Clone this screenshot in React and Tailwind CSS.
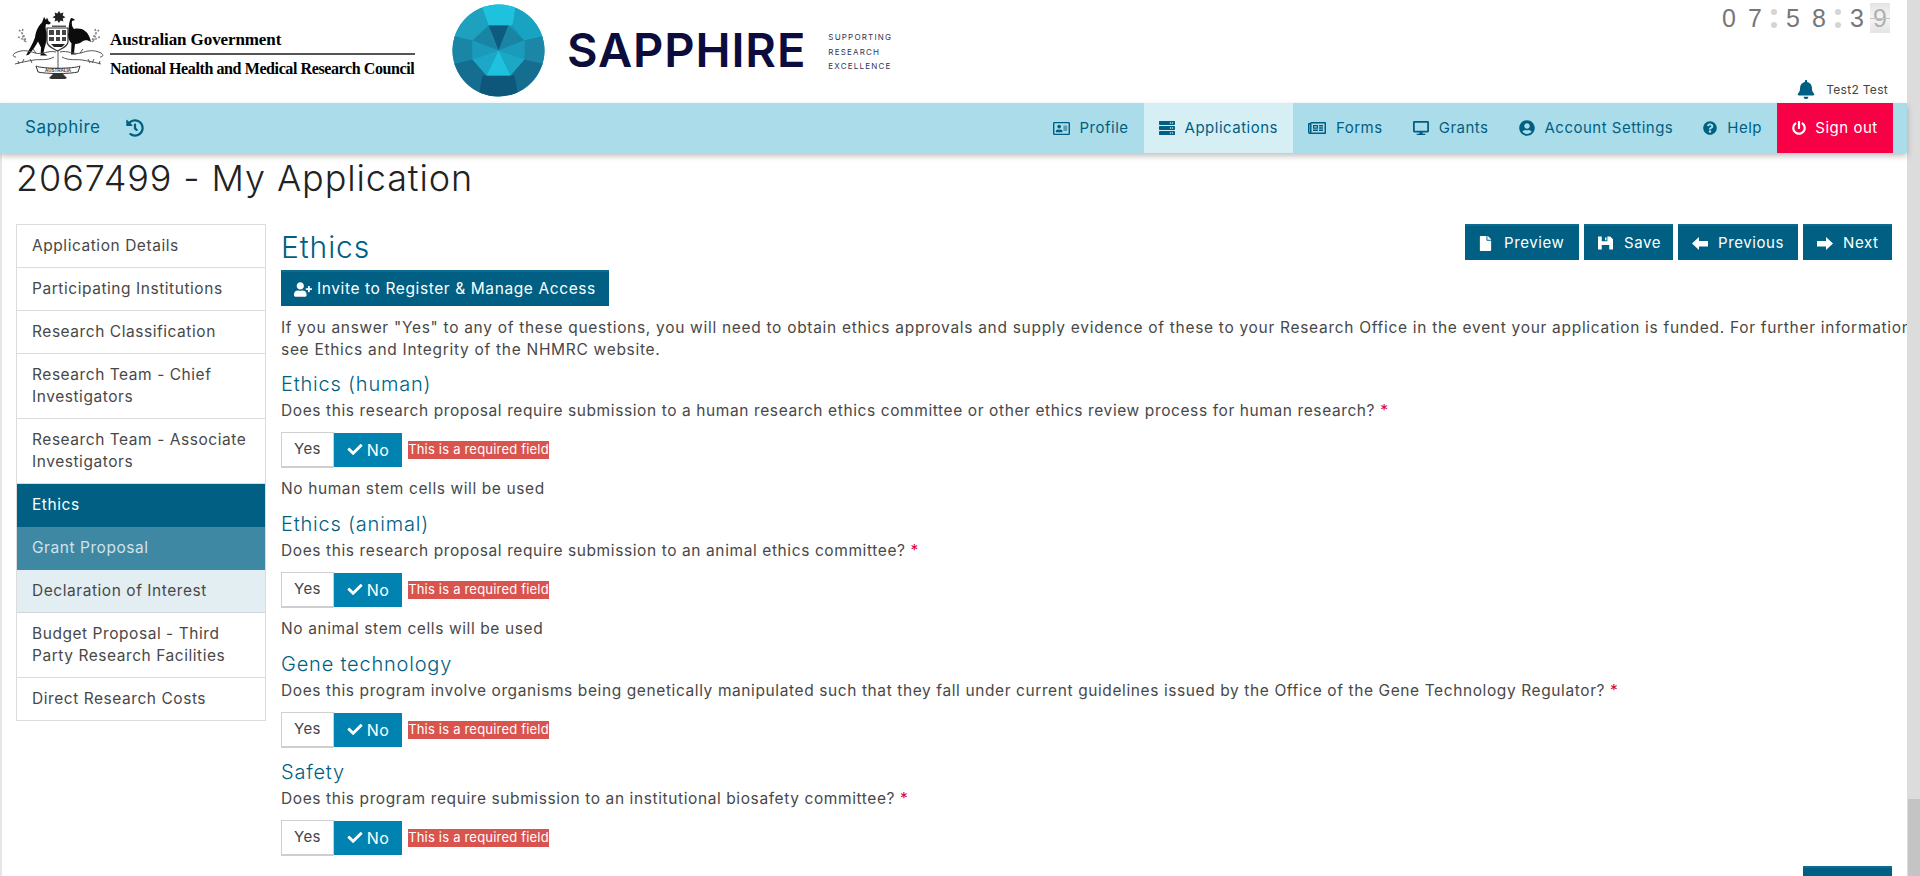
import React from 'react';
import { FaRegAddressCard, FaServer, FaRegNewspaper, FaDesktop, FaUserCircle, FaQuestionCircle, FaPowerOff, FaHistory, FaBell, FaUserPlus, FaFile, FaCheck } from 'react-icons/fa';

const font = { fontFamily: 'Inter, "Liberation Sans", sans-serif' };

const ArrowLeft = ({ className }) => (
  <svg viewBox="0 0 16 14" className={className} fill="currentColor"><path d="M0 7.5L7 1v4h9v5.5H7V14z" /></svg>
);
const ArrowRight = ({ className }) => (
  <svg viewBox="0 0 16 14" className={className} fill="currentColor"><path d="M16 7.5L9 1v4H0v5.5h9V14z" /></svg>
);
const Floppy = ({ className }) => (
  <svg viewBox="0 0 16 14" className={className} fill="currentColor"><path fillRule="evenodd" d="M0 0h13l3 3v11H0zM4 0v5h6V0zM7.5 1h1.5v3H7.5zM4 9v5h8V9z" /></svg>
);

const CoatOfArms = () => (
  <svg width="98" height="72" viewBox="0 0 98 72" className="shrink-0">
    <path d="M49 1l1.6 2.6 2.8-1-.7 3 2.8 1.6-2.8 1.4.7 3-2.8-1L49 13l-1.6-2.4-2.8 1 .7-3-2.8-1.4 2.8-1.6-.7-3 2.8 1z" fill="#222" />
    <path d="M42 15.5h14v1.5H42z" fill="#555" />
    <g stroke="#888" strokeWidth="1.6" strokeDasharray="2 1.4" fill="none">
      <path d="M9 20c3 3 6 6 7 12M13 19c-2 5 0 9 3 13M8 27c3 1 6 3 8 5" />
      <path d="M89 20c-3 3-6 6-7 12M85 19c2 5 0 9-3 13M90 27c-3 1-6 3-8 5" />
    </g>
    <path d="M37 18h21v14c0 4-5 6-10.500 9-5.500-3-10.500-5-10.500-9z" fill="#fff" stroke="#333" strokeWidth="1.2" />
    <path d="M39 20h5v5h-5zM46 20h4v5h-4zM52 20h4v5h-4zM39 27h5v4h-5zM46 27h4v4h-4zM52 27h4v4h-4z" fill="#444" />
    <path d="M41 34h14l-3 3h-8z" fill="#222" />
    <path d="M34 7l2 3 1-2.500 1.500 3.500 2.500 2-2 1.500-3-.5c-1 3 0 6 .5 9 .5 5-.500 11-2 15l-1 5 4 2.500h-7l.5-8-3-6c-2 4-5 8-9 13l-3 1c3-6 7-12 9-18 1-7 3-11 7-15z" fill="#0c0c0c" />
    <path d="M61 8c2 0 3 1 4 2l-3 1c-.5 3 0 6 2 8 4-1 8-.5 11 2 3 2 5 6 6 11-3-2-6-2-8-1-2 2-5 3-8 3l-1 9 3 1.500h-6l.5-11c-3-3-4-7-3-12 .5-4 0-9 2.500-13.500z" fill="#0c0c0c" />
    <g stroke="#555" strokeWidth="1" fill="none">
      <path d="M48 40v20M46 42c-8-2-13 3-21 1-6-2-12-4-20 0-3 2-2 4 1 4M50 42c8-2 13 3 21 1 6-2 12-4 20 0 3 2 2 4-1 4" />
      <path d="M44 47c-7 4-14 2-20 3-6 1-12 2-19 4M52 47c7 4 14 2 20 3 6 1 12 2 19 4" />
      <path d="M14 49l-2 4M20 49l2 4M8 51l1 3M78 49l2 4M84 49l-2 4M90 51l-1 3M26 43l-3-4M70 43l3-4" />
    </g>
    <path d="M26 56c6 3 38 3 44 0l-2 6c-8 2-32 2-40 0z" fill="#fff" stroke="#333" strokeWidth="1" />
    <text x="48" y="61.500" textAnchor="middle" fontSize="4.500" fontWeight="700" fill="#333" fontFamily="Liberation Sans, sans-serif">AUSTRALIA</text>
    <path d="M44 63h8l5 5-2 1H41l-2-1z" fill="#333" />
  </svg>
);

const Gem = () => (
  <svg width="93" height="93" viewBox="-46.5 -46.5 93 93" className="shrink-0">
    <defs>
      <clipPath id="gem-clip"><circle cx="0" cy="0" r="46" /></clipPath>
    </defs>
    <g clipPath="url(#gem-clip)">
      <rect x="-47" y="-47" width="94" height="94" fill="#1a93b5" />
      <path d="M-18 -47H18L14 -25H-10z" fill="#1ec2df" />
      <path d="M18 -47L47 -25V-12L25 -10L14 -25z" fill="#18a3c3" />
      <path d="M-18 -47L-47 -25V-12L-25 -10L-10 -25z" fill="#1ea0bf" />
      <path d="M-47 -15L-26 -10V9L-47 16z" fill="#1a86a6" />
      <path d="M47 -15L26 -10V9L47 16z" fill="#1b86a6" />
      <path d="M-47 14L-26 9L-12 25L-16 47H-47z" fill="#156d90" />
      <path d="M47 14L26 9L12 25L16 47H47z" fill="#156d90" />
      <path d="M-16 25H16L20 47H-20z" fill="#0e567a" />
      <path d="M-10 -25H10L0 0z" fill="#0f5a7f" />
      <path d="M-10 -25L-26 -10L0 0z" fill="#1a84a5" />
      <path d="M10 -25L26 -10L0 0z" fill="#1a84a5" />
      <path d="M-26 -10V9L0 0z" fill="#1a9bbb" />
      <path d="M26 -10V9L0 0z" fill="#1a9bbb" />
      <path d="M-26 9L-12 25L0 0z" fill="#1ba7c5" />
      <path d="M26 9L12 25L0 0z" fill="#1ba7c5" />
      <path d="M-12 25H12L0 0z" fill="#1ec2df" />
    </g>
  </svg>
);

const Digit = ({ children }) => (
  <span className="w-[26px] text-center">{children}</span>
);
const Colon = () => (
  <span className="flex h-[28px] w-[12px] flex-col items-center justify-center gap-[7px]">
    <span className="h-[6px] w-[6px] rounded-full bg-[#d4d4d4]" />
    <span className="h-[6px] w-[6px] rounded-full bg-[#d4d4d4]" />
  </span>
);

const NavItem = ({ icon: Icon, label, active, cls }) => (
  <a className={`flex h-full items-center gap-[10px] px-[15px] text-[15px] tracking-[0.5px] text-[#005f83] ${active ? 'bg-[#d5eff5]' : ''}`}>
    <Icon className={cls} />
    <span>{label}</span>
  </a>
);

const menu = [
  { label: 'Application Details', cls: 'h-[43px]' },
  { label: 'Participating Institutions', cls: 'h-[43px]' },
  { label: 'Research Classification', cls: 'h-[43px]' },
  { label: ['Research Team - Chief', 'Investigators'], cls: 'h-[65px]' },
  { label: ['Research Team - Associate', 'Investigators'], cls: 'h-[65px]' },
  { label: 'Ethics', cls: 'h-[43px] bg-[#005f83] !text-white !border-[#005f83]' },
  { label: 'Grant Proposal', cls: 'h-[43px] bg-[#3f88a4] !text-[#cfe3ea] !border-[#3f88a4]' },
  { label: 'Declaration of Interest', cls: 'h-[43px] bg-[#e3eef2] !border-[#ccd8dd]' },
  { label: ['Budget Proposal - Third', 'Party Research Facilities'], cls: 'h-[65px]' },
  { label: 'Direct Research Costs', cls: 'h-[43px]' },
];

const TopButton = ({ icon: Icon, label, cls, iconCls }) => (
  <button className={`flex h-[36px] items-center pl-[14px] text-[15px] tracking-[0.6px] text-white border-t-2 border-t-[#0b6c8e] bg-[#005f83] ${cls}`}>
    <Icon className={iconCls} />
    <span>{label}</span>
  </button>
);

const YesNo = () => (
  <div className="flex items-center">
    <div className="flex h-[36px] w-[53px] items-center justify-center border border-[#cfcfcf] border-b-2 bg-white text-[15px] tracking-[0.4px] text-[#444]">Yes</div>
    <div className="flex h-[34px] w-[68px] items-center justify-center gap-[4px] bg-[#0083b0] text-[16px] tracking-[0.4px] text-white">
      <FaCheck className="h-[15px] w-[16px] -translate-y-[1px]" />
      <span>No</span>
    </div>
    <div className="ml-[6px] flex h-[18px] w-[141px] items-center justify-center bg-[#d9534f] text-[13px] tracking-[0.2px] text-white whitespace-nowrap">This is a required field</div>
  </div>
);

const Question = ({ title, q, note, mt }) => (
  <section className={mt}>
    <h3 className="mb-[2px] h-[28px] text-[20px] font-light leading-[28px] tracking-[0.8px] text-[#005f83]">{title}</h3>
    <p className="h-[22px] text-[15.5px] leading-[22px] tracking-[0.6px] whitespace-nowrap">{q} <span className="text-[#e0002d]">*</span></p>
    <div className="mt-[10px]"><YesNo /></div>
    {note && <p className="mt-[10px] h-[22px] text-[15.5px] leading-[22px] tracking-[0.6px]">{note}</p>}
  </section>
);

export default function App() {
  return (
    <div className="flex h-[876px] w-[1920px] overflow-hidden bg-white text-[#484848]" style={font}>
      <div className="flex w-[1907px] flex-col">
        <header className="flex h-[103px] shrink-0">
          <div className="flex items-start pl-[10px] pt-[10px]">
            <CoatOfArms />
            <div className="ml-[2px] mt-[20px] w-[305px] text-black" style={{ fontFamily: '"Liberation Serif", serif' }}>
              <div className="text-[17px] font-bold leading-[20px] tracking-[-0.1px]">Australian Government</div>
              <div className="mt-[3px] h-[2px] bg-[#555]" />
              <div className="mt-[4px] text-[16px] font-bold leading-[20px] tracking-[-0.4px] whitespace-nowrap">National Health and Medical Research Council</div>
            </div>
          </div>
          <div className="ml-[37px] flex items-start pt-[4px]">
            <Gem />
            <div className="ml-[22px] mt-[18px] text-[47px] font-semibold leading-[56px] tracking-[0.9px] text-[#0c0c3d]">SAPPHIRE</div>
            <div className="ml-[22px] mt-[26px] text-[8px] leading-[14.5px] tracking-[1.2px] text-[#33335c]">
              <div>SUPPORTING</div>
              <div>RESEARCH</div>
              <div>EXCELLENCE</div>
            </div>
          </div>
          <div className="ml-auto flex flex-col items-end pr-[17px]">
            <div className="mt-[3px] flex h-[30px] items-center text-[25px] leading-none text-[#777]" style={{ fontFamily: '"Liberation Sans", sans-serif' }}>
              <Digit>0</Digit><Digit>7</Digit><Colon /><Digit>5</Digit><Digit>8</Digit><Colon /><Digit>3</Digit>
              <span className="relative flex h-[30px] w-[20px] items-center justify-center bg-gradient-to-b from-[#e4e4e4] via-[#f4f4f4] to-[#e4e4e4] text-[#b0b0b0]">
                9
                <span className="absolute inset-x-0 top-[15px] h-px bg-[#c4c4c4]" />
              </span>
            </div>
            <div className="mt-[47px] flex items-center gap-[11px] pr-[2px]">
              <FaBell className="h-[19px] w-[18px] text-[#005f83]" />
              <span className="text-[12px] tracking-[0.3px] text-[#444]">Test2 Test</span>
            </div>
          </div>
        </header>

        <nav className="relative z-10 flex h-[50px] shrink-0 items-center bg-[#aadde9] pl-[25px] pr-[14px] shadow-[0_3px_6px_rgba(0,0,0,0.25)]">
          <span className="text-[17px] tracking-[0.5px] text-[#005f83]">Sapphire</span>
          <FaHistory className="ml-[26px] h-[18px] w-[18px] text-[#005f83]" />
          <div className="ml-auto flex h-full items-center">
            <NavItem icon={FaRegAddressCard} label="Profile" cls="h-[17px] w-[17px] shrink-0" />
            <NavItem icon={FaServer} label="Applications" active cls="h-[16px] w-[16px] shrink-0" />
            <NavItem icon={FaRegNewspaper} label="Forms" cls="h-[16px] w-[18px] shrink-0" />
            <NavItem icon={FaDesktop} label="Grants" cls="h-[16px] w-[16px] shrink-0" />
            <NavItem icon={FaUserCircle} label="Account Settings" cls="h-[16px] w-[16px] shrink-0" />
            <NavItem icon={FaQuestionCircle} label="Help" cls="h-[14px] w-[14px] shrink-0" />
            <a className="flex h-full w-[116px] items-center justify-center gap-[9px] bg-[#f80045] text-[15px] tracking-[0.5px] text-white">
              <FaPowerOff className="h-[14px] w-[14px]" />
              <span>Sign out</span>
            </a>
          </div>
        </nav>

        <main className="min-h-0 flex-1 border-l-2 border-[#e6e6e6] pl-[14px] pr-[15px]">
          <h1 className="mt-[3px] h-[68px] text-[36px] font-light leading-[44px] tracking-[0.9px] text-[#222]">2067499 - My Application</h1>
          <div className="flex gap-[15px]">
            <aside className="w-[250px] shrink-0">
              <ul className="border-x border-[#dcdcdc] border-t">
                {menu.map((m, i) => (
                  <li key={i} className={`flex flex-col justify-center border-b border-[#dcdcdc] pl-[15px] text-[15.5px] leading-[22px] tracking-[0.55px] text-[#484848] whitespace-nowrap ${m.cls}`}>
                    {Array.isArray(m.label) ? m.label.map((l) => <span key={l}>{l}</span>) : m.label}
                  </li>
                ))}
              </ul>
            </aside>
            <div className="min-w-0 flex-1">
              <div className="flex items-start justify-between">
                <h2 className="text-[30px] font-light leading-[46px] tracking-[0.9px] text-[#005f83]">Ethics</h2>
                <div className="flex gap-[5px]">
                  <TopButton icon={FaFile} label="Preview" cls="w-[114px] gap-[12px]" iconCls="h-[15px] w-[13px]" />
                  <TopButton icon={Floppy} label="Save" cls="w-[89px] gap-[11px]" iconCls="h-[14px] w-[15px]" />
                  <TopButton icon={ArrowLeft} label="Previous" cls="w-[120px] gap-[10px]" iconCls="h-[14px] w-[16px]" />
                  <TopButton icon={ArrowRight} label="Next" cls="w-[89px] gap-[10px]" iconCls="h-[14px] w-[16px]" />
                </div>
              </div>
              <button className="flex h-[36px] w-[328px] items-center gap-[5px] border-t-2 border-t-[#0b6c8e] bg-[#005f83] pl-[13px] text-[15.5px] tracking-[0.6px] text-white">
                <FaUserPlus className="h-[15px] w-[18px]" />
                <span>Invite to Register &amp; Manage Access</span>
              </button>
              <p className="mt-[11px] text-[15.5px] leading-[22px] tracking-[0.7px] whitespace-nowrap">If you answer "Yes" to any of these questions, you will need to obtain ethics approvals and supply evidence of these to your Research Office in the event your application is funded. For further information<br />see Ethics and Integrity of the NHMRC website.</p>
              <Question mt="mt-[9px]" title="Ethics (human)" q="Does this research proposal require submission to a human research ethics committee or other ethics review process for human research?" note="No human stem cells will be used" />
              <Question mt="mt-[10px]" title="Ethics (animal)" q="Does this research proposal require submission to an animal ethics committee?" note="No animal stem cells will be used" />
              <Question mt="mt-[10px]" title="Gene technology" q="Does this program involve organisms being genetically manipulated such that they fall under current guidelines issued by the Office of the Gene Technology Regulator?" />
              <Question mt="mt-[10px]" title="Safety" q="Does this program require submission to an institutional biosafety committee?" />
              <div className="mt-[10px] flex justify-end">
                <TopButton icon={ArrowRight} label="Next" cls="w-[89px] gap-[10px]" iconCls="h-[14px] w-[16px]" />
              </div>
            </div>
          </div>
        </main>
      </div>
      <div className="flex w-[13px] shrink-0 flex-col justify-end bg-[#dcdcdc] pl-[1px]">
        <div className="h-[77px] bg-[#c4c4c4]" />
      </div>
    </div>
  );
}
